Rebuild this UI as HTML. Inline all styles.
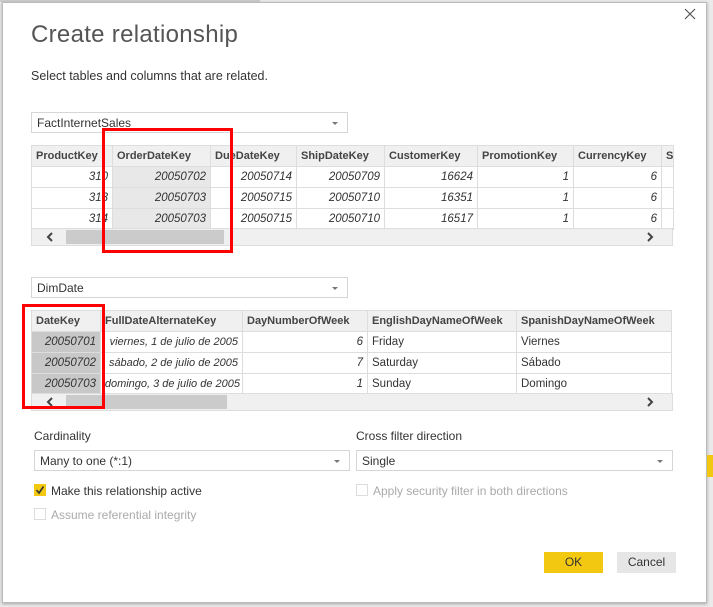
<!DOCTYPE html><html><head><style>
body{margin:0;width:713px;height:607px;background:#eaeaea;position:relative;overflow:hidden;font-family:"Liberation Sans",sans-serif;color:#333}
.a{position:absolute}
.dlg{left:2px;top:2px;width:703px;height:599px;background:#fff;border:1px solid #bbb;box-shadow:0 1px 3px rgba(0,0,0,.3)}
.dd{border:1px solid #d6d6d6;background:#fff;font-size:12px;line-height:20px;padding-left:5px;box-sizing:border-box}
.dd:after{content:"";position:absolute;right:9px;top:9px;border:3px solid transparent;border-top:3px solid #777}
table{border-collapse:collapse;font-size:11.5px;position:absolute;table-layout:fixed}
td{border:1px solid #ddd;height:21px;padding:0 4px;white-space:nowrap;overflow:hidden;box-sizing:border-box}
tr.h td{background:#f0f0f0;font-weight:bold;color:#444;font-size:11px}
td.n{text-align:right;font-style:italic}
td.s{background:#e8e8e8}
td.s2{background:#c8c8c8}
.sb{background:#f0f0f0;border:1px solid #ddd;box-sizing:border-box}
.th{background:#cbcbcb}
.red{border:3px solid #f00;box-sizing:border-box}
.lbl{font-size:12px;color:#333}
</style></head><body>
<div class="a" style="left:0;top:0;width:260px;height:2px;background:#ccc"></div>
<div class="a dlg"></div>
<svg class="a" style="left:684px;top:8px" width="12" height="12"><path d="M1 1L11 11M11 1L1 11" stroke="#555" stroke-width="1.2"/></svg>
<div class="a" style="left:31px;top:21px;font-size:24px;color:#555;letter-spacing:0.3px">Create relationship</div>
<div class="a lbl" style="left:31px;top:69px;font-size:12.5px">Select tables and columns that are related.</div>
<div class="a dd" style="left:31px;top:112px;width:317px;height:21px">FactInternetSales</div>
<table style="left:31px;top:145px;width:642px">
<colgroup><col style="width:81px"><col style="width:98px"><col style="width:86px"><col style="width:88px"><col style="width:93px"><col style="width:96px"><col style="width:88px"><col style="width:12px"></colgroup>
<tr class="h"><td>ProductKey</td><td class="s">OrderDateKey</td><td>DueDateKey</td><td>ShipDateKey</td><td>CustomerKey</td><td>PromotionKey</td><td>CurrencyKey</td><td>S</td></tr>
<tr><td class="n">310</td><td class="n s">20050702</td><td class="n">20050714</td><td class="n">20050709</td><td class="n">16624</td><td class="n">1</td><td class="n">6</td><td></td></tr>
<tr><td class="n">313</td><td class="n s">20050703</td><td class="n">20050715</td><td class="n">20050710</td><td class="n">16351</td><td class="n">1</td><td class="n">6</td><td></td></tr>
<tr><td class="n">314</td><td class="n s">20050703</td><td class="n">20050715</td><td class="n">20050710</td><td class="n">16517</td><td class="n">1</td><td class="n">6</td><td></td></tr>
</table>
<div class="a sb" style="left:31px;top:228px;width:642px;height:18px"></div>
<div class="a th" style="left:66px;top:230px;width:158px;height:14px"></div>
<svg class="a" style="left:46px;top:232px" width="8" height="10"><path d="M6 1L2 5L6 9" stroke="#444" stroke-width="2" fill="none"/></svg>
<svg class="a" style="left:646px;top:232px" width="8" height="10"><path d="M2 1L6 5L2 9" stroke="#444" stroke-width="2" fill="none"/></svg>
<div class="a red" style="left:102px;top:128px;width:131px;height:125px"></div>
<div class="a dd" style="left:31px;top:277px;width:317px;height:21px">DimDate</div>
<table style="left:31px;top:310px;width:640px">
<colgroup><col style="width:69px"><col style="width:142px"><col style="width:125px"><col style="width:149px"><col style="width:155px"></colgroup>
<tr class="h"><td class="s2">DateKey</td><td>FullDateAlternateKey</td><td>DayNumberOfWeek</td><td>EnglishDayNameOfWeek</td><td>SpanishDayNameOfWeek</td></tr>
<tr><td class="n s2">20050701</td><td class="n" style="font-size:11px">viernes, 1 de julio de 2005</td><td class="n">6</td><td>Friday</td><td>Viernes</td></tr>
<tr><td class="n s2">20050702</td><td class="n" style="font-size:11px">sábado, 2 de julio de 2005</td><td class="n">7</td><td>Saturday</td><td>Sábado</td></tr>
<tr><td class="n s2">20050703</td><td class="n" style="padding:0 2px;font-size:11px">domingo, 3 de julio de 2005</td><td class="n">1</td><td>Sunday</td><td>Domingo</td></tr>
</table>
<div class="a sb" style="left:31px;top:393px;width:642px;height:18px"></div>
<div class="a th" style="left:66px;top:395px;width:161px;height:14px"></div>
<svg class="a" style="left:46px;top:397px" width="8" height="10"><path d="M6 1L2 5L6 9" stroke="#444" stroke-width="2" fill="none"/></svg>
<svg class="a" style="left:646px;top:397px" width="8" height="10"><path d="M2 1L6 5L2 9" stroke="#444" stroke-width="2" fill="none"/></svg>
<div class="a red" style="left:22px;top:304px;width:83px;height:105px"></div>
<div class="a lbl" style="left:34px;top:429px">Cardinality</div>
<div class="a lbl" style="left:356px;top:429px">Cross filter direction</div>
<div class="a dd" style="left:34px;top:450px;width:316px;height:21px">Many to one (*:1)</div>
<div class="a dd" style="left:356px;top:450px;width:317px;height:21px">Single</div>
<div class="a" style="left:34px;top:484px;width:12px;height:12px;background:#f2c811"></div>
<svg class="a" style="left:34px;top:484px" width="12" height="12"><path d="M2.5 6L5 9L9.5 2.5" stroke="#333" stroke-width="1.6" fill="none"/></svg>
<div class="a lbl" style="left:51px;top:484px">Make this relationship active</div>
<div class="a" style="left:34px;top:508px;width:10px;height:10px;border:1px solid #ddd"></div>
<div class="a lbl" style="left:51px;top:508px;color:#aaa">Assume referential integrity</div>
<div class="a" style="left:356px;top:484px;width:10px;height:10px;border:1px solid #ddd"></div>
<div class="a lbl" style="left:373px;top:484px;color:#aaa">Apply security filter in both directions</div>
<div class="a" style="left:544px;top:552px;width:59px;height:21px;background:#f2c811;font-size:12px;line-height:21px;text-align:center">OK</div>
<div class="a" style="left:617px;top:552px;width:59px;height:21px;background:#e6e6e6;font-size:12px;line-height:21px;text-align:center">Cancel</div>
<div class="a" style="left:707px;top:455px;width:6px;height:22px;background:#f2c811"></div>
</body></html>
